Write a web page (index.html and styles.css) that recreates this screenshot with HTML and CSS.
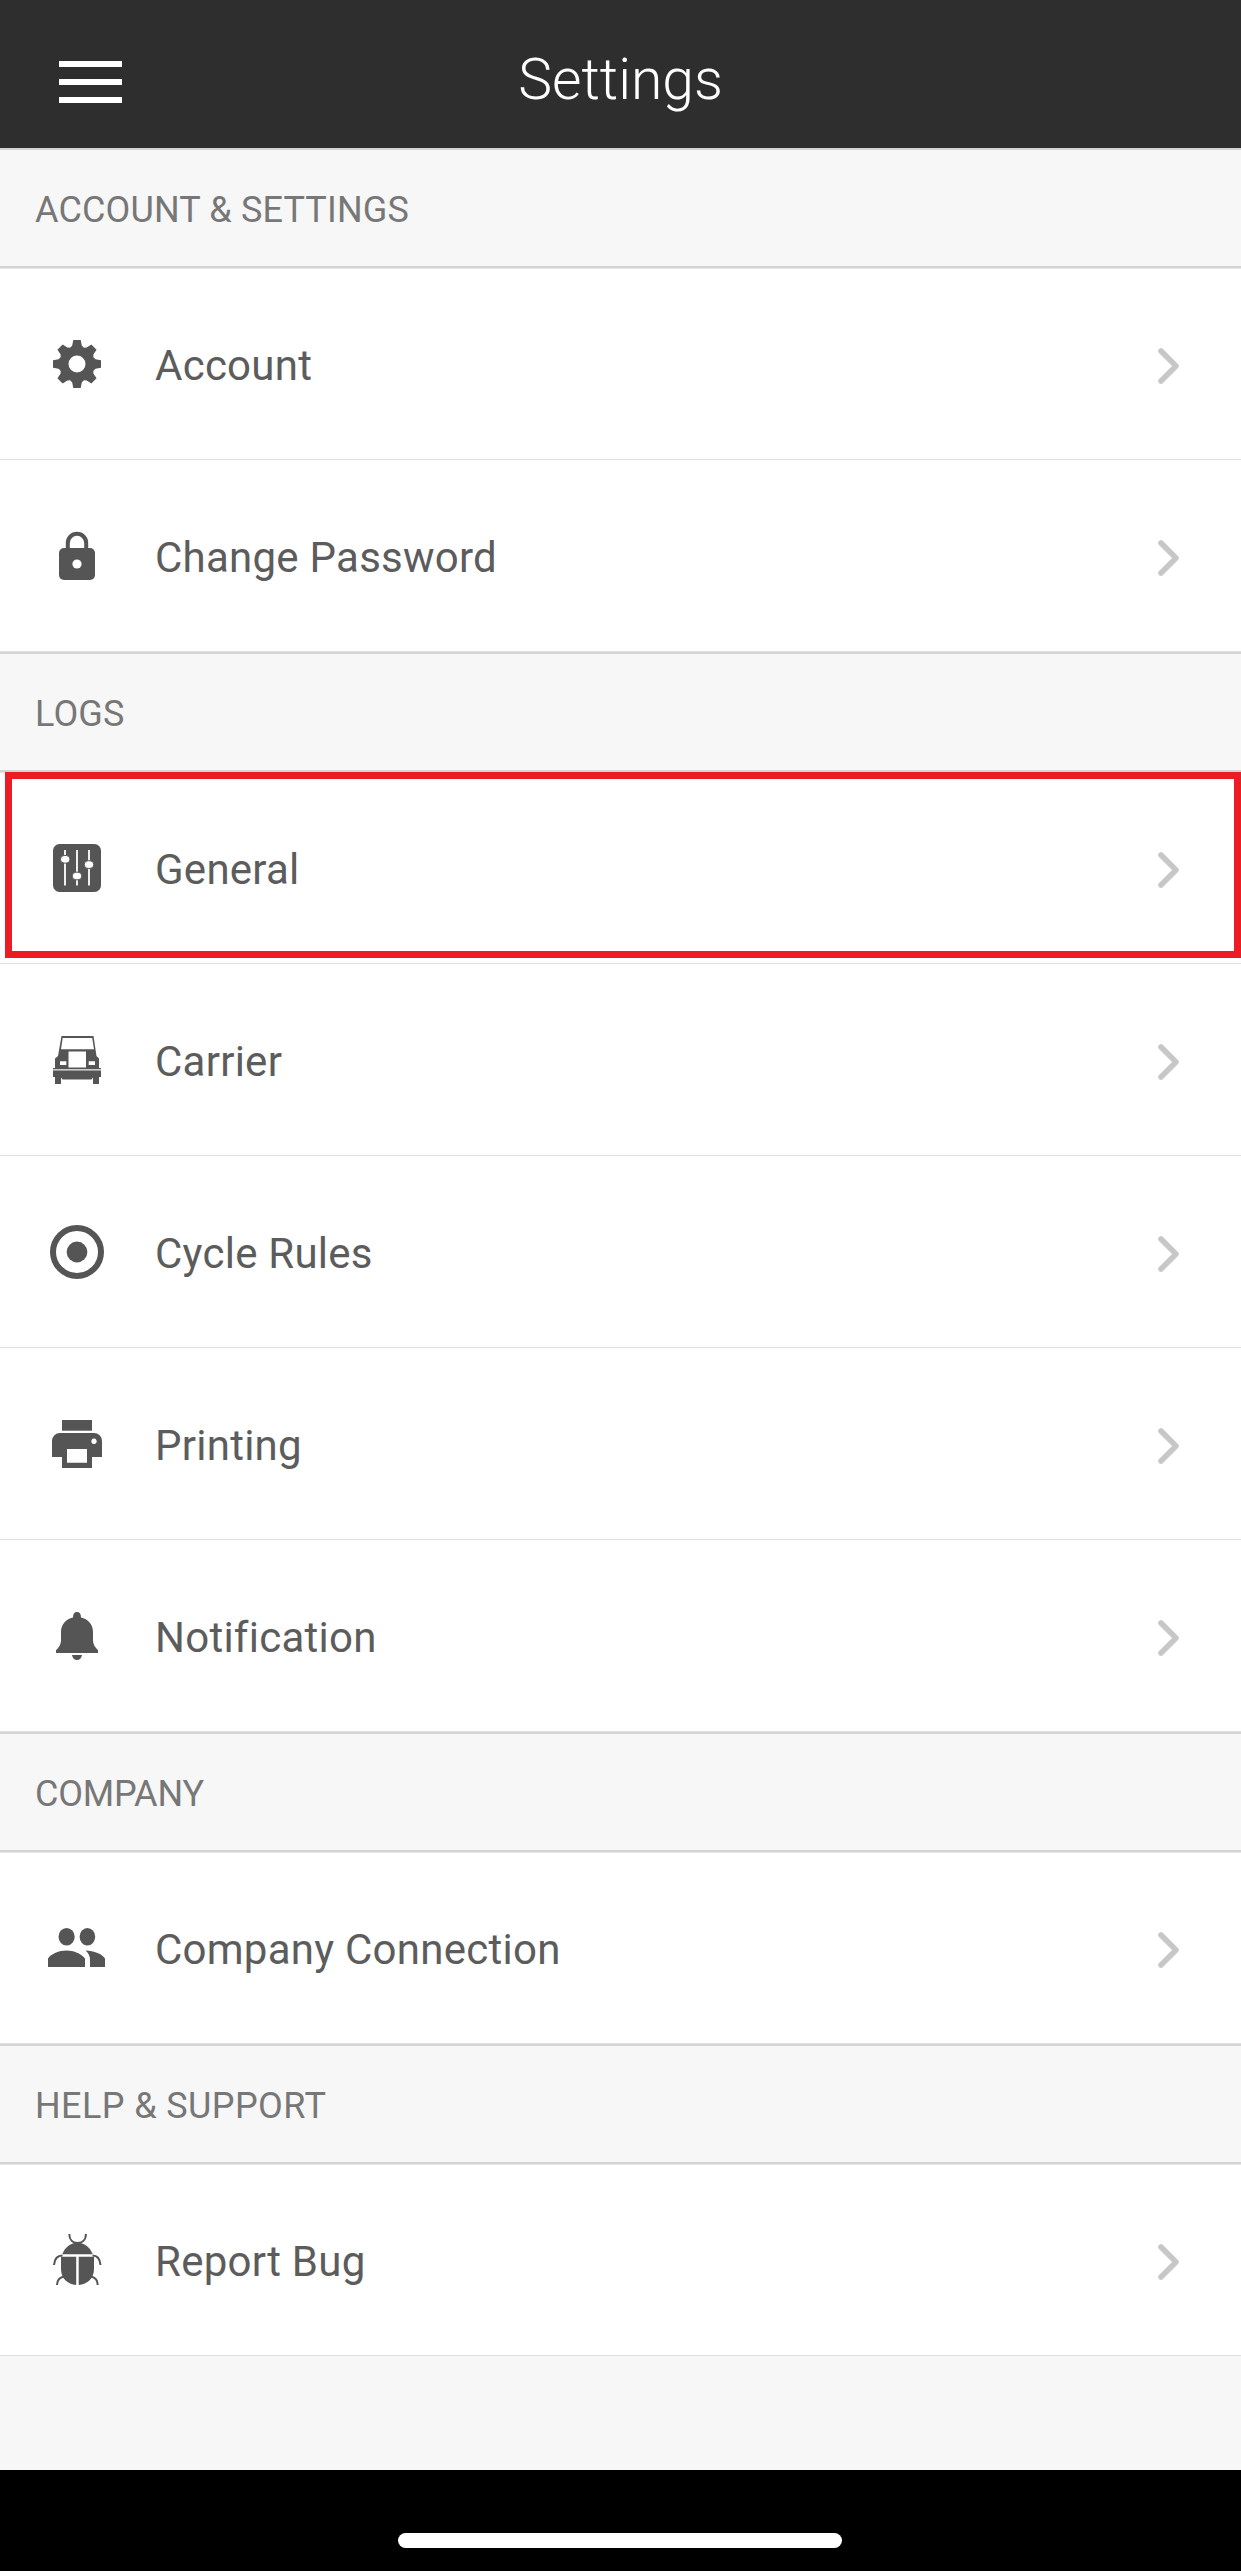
FILE: index.html
```html
<!DOCTYPE html>
<html lang="en">
<head>
	<meta charset="UTF-8">
	<title>Settings</title>
	<link rel="stylesheet" href="styles.css">
</head>
<body>
<div id="wrapper">
    <div class="header">
        <a class="menu-btn"><i></i><i></i><i></i></a>
        <h1>Settings</h1>
    </div>

    <h2 class="list-title"><span>ACCOUNT &amp; SETTINGS</span></h2>
    <ul class="list">
        <li>
            <svg class="icon" viewBox="-30 -30 60 60">
                <circle r="13" fill="none" stroke="#555" stroke-width="9"/>
                <g id="teeth">
                    <path id="tooth" d="M-3.7 -24H3.7L4.8 -18.5L7 -16H-7L-4.8 -18.5Z"/>
                    <use href="#tooth" transform="rotate(90)"/>
                    <use href="#tooth" transform="rotate(180)"/>
                    <use href="#tooth" transform="rotate(270)"/>
                </g>
                <use href="#teeth" transform="rotate(45)"/>
            </svg>
            <span>Account</span>
            <svg class="arrow" viewBox="0 0 24 40"><path d="M4 5L19 20L4 35"/></svg>
        </li>
        <li>
            <svg class="icon" viewBox="-30 -30 60 60">
                <path d="M-9.2 -7V-13a9.2 9.2 0 0 1 18.4 0V-7" fill="none" stroke="#555" stroke-width="4"/>
                <rect x="-18" y="-8" width="36" height="32" rx="5"/>
                <circle cy="8" r="4.6" fill="#fff"/>
            </svg>
            <span>Change Password</span>
            <svg class="arrow" viewBox="0 0 24 40"><path d="M4 5L19 20L4 35"/></svg>
        </li>
    </ul>

    <h2 class="list-title"><span>LOGS</span></h2>
    <ul class="list">
        <li class="current">
            <svg class="icon" viewBox="-30 -30 60 60">
                <rect x="-24" y="-24" width="48" height="48" rx="6.5"/>
                <path d="M-12 -18V17.5M0 -18V17.5M12 -18V17.5" stroke="#fff" stroke-width="1.8"/>
                <g fill="#fff" stroke="#555">
                    <rect x="-16.5" y="-12.5" width="9.4" height="7.6" rx="3.6"/>
                    <rect x="-4.7" y="4.2" width="9.4" height="7.6" rx="3.6"/>
                    <rect x="7.3" y="-7.2" width="9.4" height="7.6" rx="3.6"/>
                </g>
            </svg>
            <span>General</span>
            <svg class="arrow" viewBox="0 0 24 40"><path d="M4 5L19 20L4 35"/></svg>
        </li>
        <li>
            <svg class="icon" viewBox="-30 -30 60 60">
                <path fill-rule="evenodd" d="M-15.5 -24H16.5L19.5 -4L22 -1.5V8H24V9H-24V8H-22V-1.5L-19 -4ZM-14.3 -22L-16 -10.7H17L15.2 -22ZM-8.5 -8.5V7.5H9V-8.5ZM-17 1.3V5H-10.7V1.3ZM11.7 1.3V5H18V1.3Z"/>
                <path d="M-24 10.5H24V17H22V24H16V17.5L14.5 19.5H-14.5L-16 17.5V24H-22V17H-24Z"/>
                <path d="M-24 9H24V10.5H-24Z" opacity=".3"/>
            </svg>
            <span>Carrier</span>
            <svg class="arrow" viewBox="0 0 24 40"><path d="M4 5L19 20L4 35"/></svg>
        </li>
        <li>
            <svg class="icon" viewBox="-30 -30 60 60">
                <circle r="24" fill="none" stroke="#555" stroke-width="6"/>
                <circle r="10.4"/>
            </svg>
            <span>Cycle Rules</span>
            <svg class="arrow" viewBox="0 0 24 40"><path d="M4 5L19 20L4 35"/></svg>
        </li>
        <li>
            <svg class="icon" viewBox="-30 -30 60 60">
                <path d="M-15 -24H15V-13.3H-15Z"/>
                <path fill-rule="evenodd" d="M-17 -11H17a8 8 0 0 1 8 8V13H15V24H-15V13H-25V-3a8 8 0 0 1 8 -8ZM-10 5V18.7H10V5ZM17 -5.4a2.7 2.7 0 1 0 .01 0Z"/>
            </svg>
            <span>Printing</span>
            <svg class="arrow" viewBox="0 0 24 40"><path d="M4 5L19 20L4 35"/></svg>
        </li>
        <li>
            <svg class="icon" viewBox="-30 -30 60 60">
                <path d="M0 -24C2.5 -24 4 -22.3 4 -18.5C11 -17 16 -11.5 16 -4V4.5C16 8 18 11.5 21 14.3V17H-21V14.3C-18 11.5 -16 8 -16 4.5V-4C-16 -11.5 -11 -17 -4 -18.5C-4 -22.3 -2.5 -24 0 -24Z"/>
                <path d="M-5 19H5C4.5 22 2.5 24 0 24S-4.5 22 -5 19Z"/>
            </svg>
            <span>Notification</span>
            <svg class="arrow" viewBox="0 0 24 40"><path d="M4 5L19 20L4 35"/></svg>
        </li>
    </ul>

    <h2 class="list-title narrow"><span>COMPANY</span></h2>
    <ul class="list">
        <li>
            <svg class="icon" viewBox="-30 -30 60 60">
                <ellipse cx="-10.4" cy="-11.2" rx="8.1" ry="8.8"/>
                <ellipse cx="10.4" cy="-11.2" rx="7.8" ry="8.8"/>
                <path d="M-29 19V10.5C-26 6 -18 2.5 -10.5 2.5S4 5.5 8 10.5V19Z"/>
                <path d="M8.5 2.5C11.5 5 13 8 13 12V19H28V10.5C25.5 6 17 2.8 8.5 2.5Z"/>
            </svg>
            <span>Company Connection</span>
            <svg class="arrow" viewBox="0 0 24 40"><path d="M4 5L19 20L4 35"/></svg>
        </li>
    </ul>

    <h2 class="list-title wide"><span>HELP &amp; SUPPORT</span></h2>
    <ul class="list">
        <li>
            <svg class="icon" viewBox="-30 -30 60 60">
                <path d="M-14.7 -5.7C-12 -13 -6 -17.2 .5 -17.2S13 -13 15.7 -5.7Z"/>
                <path d="M-16 -3.3H-.8V25C-9.5 24.5 -16 18 -16 9ZM1.7 -3.3H17V9C17 18 10.5 24.5 1.7 25Z"/>
                <g fill="none" stroke="#555" stroke-width="2">
                    <path d="M-7.7 -26C-7.7 -20 -4 -17 .5 -17S8.9 -20 8.9 -26"/>
                    <path d="M-23 5C-22.5 -1 -19.5 -4.5 -14.5 -4.5M23.5 5C23 -1 20 -4.5 15.5 -4.5"/>
                    <path d="M-20 25C-20 20.5 -17.5 17.5 -13 16.5M20.7 25C20.7 20.5 18.5 17.5 14 16.5"/>
                </g>
            </svg>
            <span>Report Bug</span>
            <svg class="arrow" viewBox="0 0 24 40"><path d="M4 5L19 20L4 35"/></svg>
        </li>
    </ul>

    <div class="home-bar"><i></i></div>
</div>
</body>
</html>
```
FILE: styles.css
```css
body,ul,li,h1,h2{
    margin: 0;
    padding: 0;
}
body{
    font-family: Roboto, "Liberation Sans", sans-serif;
    background: #f7f7f7;
}
ul{
    list-style: none;
}
#wrapper{
    display: flex;
    flex-direction: column;
    height: 2571px;
    overflow: hidden;
}
.header{
    display: grid;
    grid-template-columns: 200px 1fr 200px;
    align-items: center;
    height: 148px;
    padding-top: 16px;
    box-sizing: border-box;
    background: #2e2e2e;
}
.header h1{
    padding-bottom: 4px;
    font-size: 57px;
    font-weight: 300;
    line-height: 68px;
    text-align: center;
    color: #fff;
}
.menu-btn{
    display: flex;
    flex-direction: column;
    gap: 12px;
    width: 63px;
    margin-left: 59px;
}
.menu-btn i{
    height: 6px;
    background: #fff;
}
.list-title{
    height: 116px;
    padding-left: 35px;
    border-top: 2px solid #d4d4d4;
    border-bottom: 2px solid #d4d4d4;
    font-size: 36px;
    font-weight: 400;
    line-height: 121px;
    letter-spacing: .15px;
    color: #777;
}
.list-title.narrow{
    letter-spacing: -.2px;
}
.list-title.wide{
    letter-spacing: .4px;
}
.list{
    background: #fff;
}
.list li{
    display: flex;
    align-items: center;
    height: 192px;
    padding: 0 58px 0 47px;
    box-sizing: border-box;
    border-bottom: 1px solid #e0e0e0;
    position: relative;
}
.list li:first-child{
    border-top: 1px solid #e6e6e6;
}
.list li span{
    flex: 1;
    margin-left: 48px;
    padding-top: 4px;
    font-size: 42px;
    line-height: 50px;
    letter-spacing: .25px;
    color: #5c5c5c;
}
.icon{
    width: 60px;
    height: 60px;
    fill: #555;
}
.arrow{
    width: 24px;
    height: 40px;
    margin: 4px 2px 0 0;
    fill: none;
    stroke: #c7c7c7;
    stroke-width: 5.6;
    stroke-linecap: round;
    stroke-linejoin: round;
}
/* red frame over the selected item */
.list li.current:after{
    content: "";
    position: absolute;
    top: -1px;
    left: 5px;
    right: 0;
    height: 186px;
    box-sizing: border-box;
    border: 7px solid #ec1c24;
}
.home-bar{
    height: 101px;
    margin-top: auto;
    padding: 63px 0 0 398px;
    box-sizing: border-box;
    background: #000;
}
.home-bar i{
    display: block;
    width: 444px;
    height: 15px;
    border-radius: 8px;
    background: #fff;
}
```
